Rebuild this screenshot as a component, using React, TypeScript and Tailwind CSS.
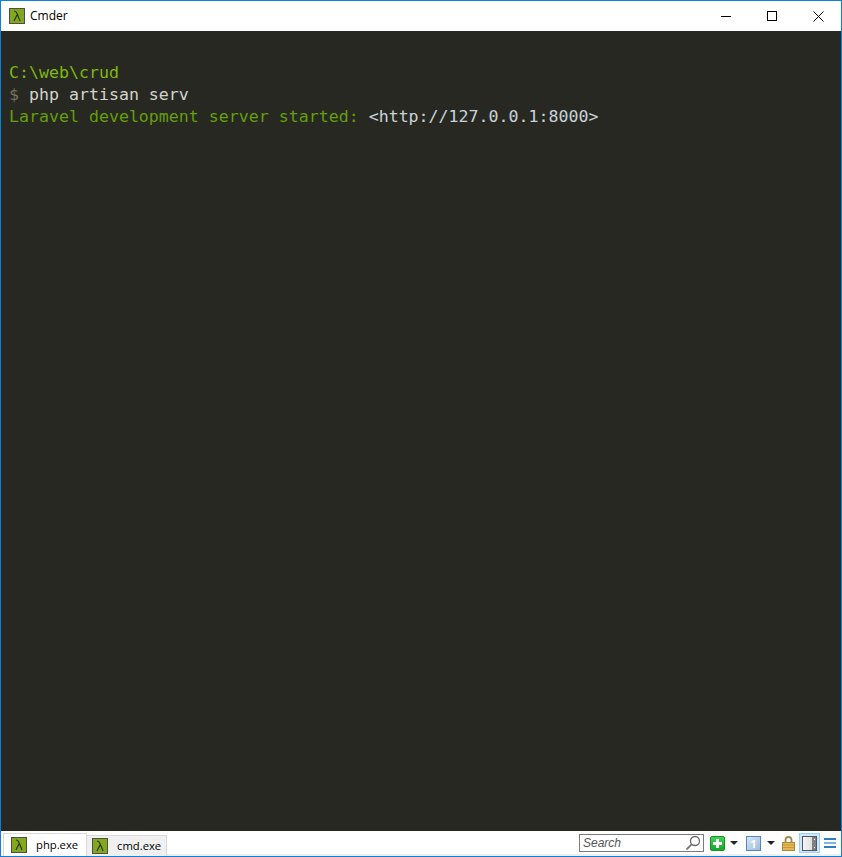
function LambdaIcon() {
  return (
    <div className="flex h-[16px] w-[16px] items-center justify-center border border-[#4c4c4c] bg-[#82a81c]">
      <svg width="10" height="12" viewBox="0 0 10 12" fill="none" stroke="#2d350f" strokeWidth="1.2">
        <path d="M2 1 C4 1 4.5 2 5 3.5 L8 11 M5 5 L2 11" />
      </svg>
    </div>
  );
}

function TitleBar() {
  return (
    <div className="flex h-[30px] items-center bg-white pl-[8px]">
      <LambdaIcon />
      <span className="ml-[5px] font-['Open_Sans','Liberation_Sans',sans-serif] text-[12px] text-black">Cmder</span>
      <div className="ml-auto flex h-full items-center">
        <div className="flex h-full w-[46px] items-center justify-center">
          <div className="h-px w-[10px] bg-black" />
        </div>
        <div className="flex h-full w-[46px] items-center justify-center">
          <div className="h-[10px] w-[10px] border border-black" />
        </div>
        <div className="flex h-full w-[46px] items-center justify-center">
          <svg width="11" height="11" viewBox="0 0 11 11" stroke="#000" strokeWidth="1" fill="none">
            <path d="M0.5 0.5 L10.5 10.5 M10.5 0.5 L0.5 10.5" />
          </svg>
        </div>
      </div>
    </div>
  );
}

function Terminal() {
  return (
    <div className="flex-1 bg-[#272822] pl-[8px] pt-[31px] font-['DejaVu_Sans_Mono','Liberation_Mono',monospace] text-[16.6px] leading-[22px] whitespace-pre">
      <div className="text-[#7fb80e]">{'C:\\web\\crud'}</div>
      <div className="text-[#d4d4cc]">
        <span className="text-[#75715e]">$</span> php artisan serv
      </div>
      <div className="text-[#649e0a]">
        Laravel development server started: <span className="text-[#c9d3d9]">{'<http://127.0.0.1:8000>'}</span>
      </div>
    </div>
  );
}

function Caret({ className }: { className: string }) {
  return <div className={`h-0 w-0 border-x-[4px] border-t-[4px] border-x-transparent border-t-[#222] ${className}`} />;
}

function StatusBar() {
  return (
    <div className="flex h-[25px] items-end bg-white font-['Open_Sans','Liberation_Sans',sans-serif] text-[11.25px] text-black">
      <div className="ml-[2px] flex h-[23px] w-[84px] items-center border border-b-0 border-[#d9d9d9] bg-white pl-[7px]">
        <LambdaIcon />
        <span className="ml-[9px]">php.exe</span>
      </div>
      <div className="flex h-[21px] w-[80px] items-center border border-b-0 border-l-0 border-[#d9d9d9] bg-[#f0f0f0] pl-[5px]">
        <LambdaIcon />
        <span className="ml-[9px]">cmd.exe</span>
      </div>
      <div className="flex h-full flex-1 items-center justify-end border-b-[2px] border-[#f0f0f0] pt-[1px]">
        <div className="flex h-[18px] w-[125px] items-center justify-between border border-[#7a7a7a] bg-white pl-[3px] pr-[2px]">
          <span className="font-['Liberation_Sans',sans-serif] text-[12px] italic text-[#555]">Search</span>
          <svg width="16" height="16" viewBox="0 0 16 16" fill="none">
            <circle cx="10" cy="6" r="4.5" stroke="#666" strokeWidth="1.3" />
            <path d="M6.8 9.2 L1.5 14.5" stroke="#777" strokeWidth="1.8" />
          </svg>
        </div>
        <div className="ml-[6px] flex h-[15px] w-[15px] items-center justify-center rounded-[2px] border border-[#1c8f2a] bg-gradient-to-b from-[#3fd654] to-[#12a82a]">
          <div className="relative h-[9px] w-[9px]">
            <div className="absolute left-[3px] top-0 h-[9px] w-[3px] bg-white" />
            <div className="absolute left-0 top-[3px] h-[3px] w-[9px] bg-white" />
          </div>
        </div>
        <Caret className="ml-[5px]" />
        <div className="ml-[8px] flex h-[15px] w-[15px] items-center justify-center border border-[#4f86c0] bg-gradient-to-br from-[#dbe8f5] to-[#9dbcdc] text-[11px] font-bold leading-none text-white">
          1
        </div>
        <Caret className="ml-[6px]" />
        <svg className="ml-[7px]" width="13" height="15" viewBox="0 0 13 15">
          <path d="M3.5 7 V4 a3 3 0 0 1 6 0 V7" fill="none" stroke="#a08a4c" strokeWidth="1.8" />
          <rect x="0.5" y="6.5" width="12" height="8" fill="#e8b850" stroke="#a8893a" />
          <path d="M1 9h11M1 11.5h11" stroke="#c8983a" />
        </svg>
        <div className="ml-[4px] flex h-[20px] w-[21px] items-center justify-center border border-[#99d1ff] bg-[#cce8ff]">
          <div className="flex h-[15px] w-[15px] justify-end border border-[#555] bg-gradient-to-r from-[#f4f4f4] to-[#d8d8d8]">
            <div className="flex w-[4px] flex-col items-center justify-between bg-[#808080] py-[2px]">
              <div className="h-px w-px bg-white" />
              <div className="h-px w-px bg-white" />
            </div>
          </div>
        </div>
        <div className="ml-[4px] mr-[5px] flex w-[12px] flex-col gap-[2px]">
          <div className="h-[2px] bg-[#2f7fc0]" />
          <div className="h-[2px] bg-[#7fb6e0]" />
          <div className="h-[2px] bg-[#2f7fc0]" />
        </div>
      </div>
    </div>
  );
}

export default function App() {
  return (
    <div className="flex h-[857px] w-[842px] flex-col border border-[#0f7fd8]">
      <TitleBar />
      <Terminal />
      <StatusBar />
    </div>
  );
}
